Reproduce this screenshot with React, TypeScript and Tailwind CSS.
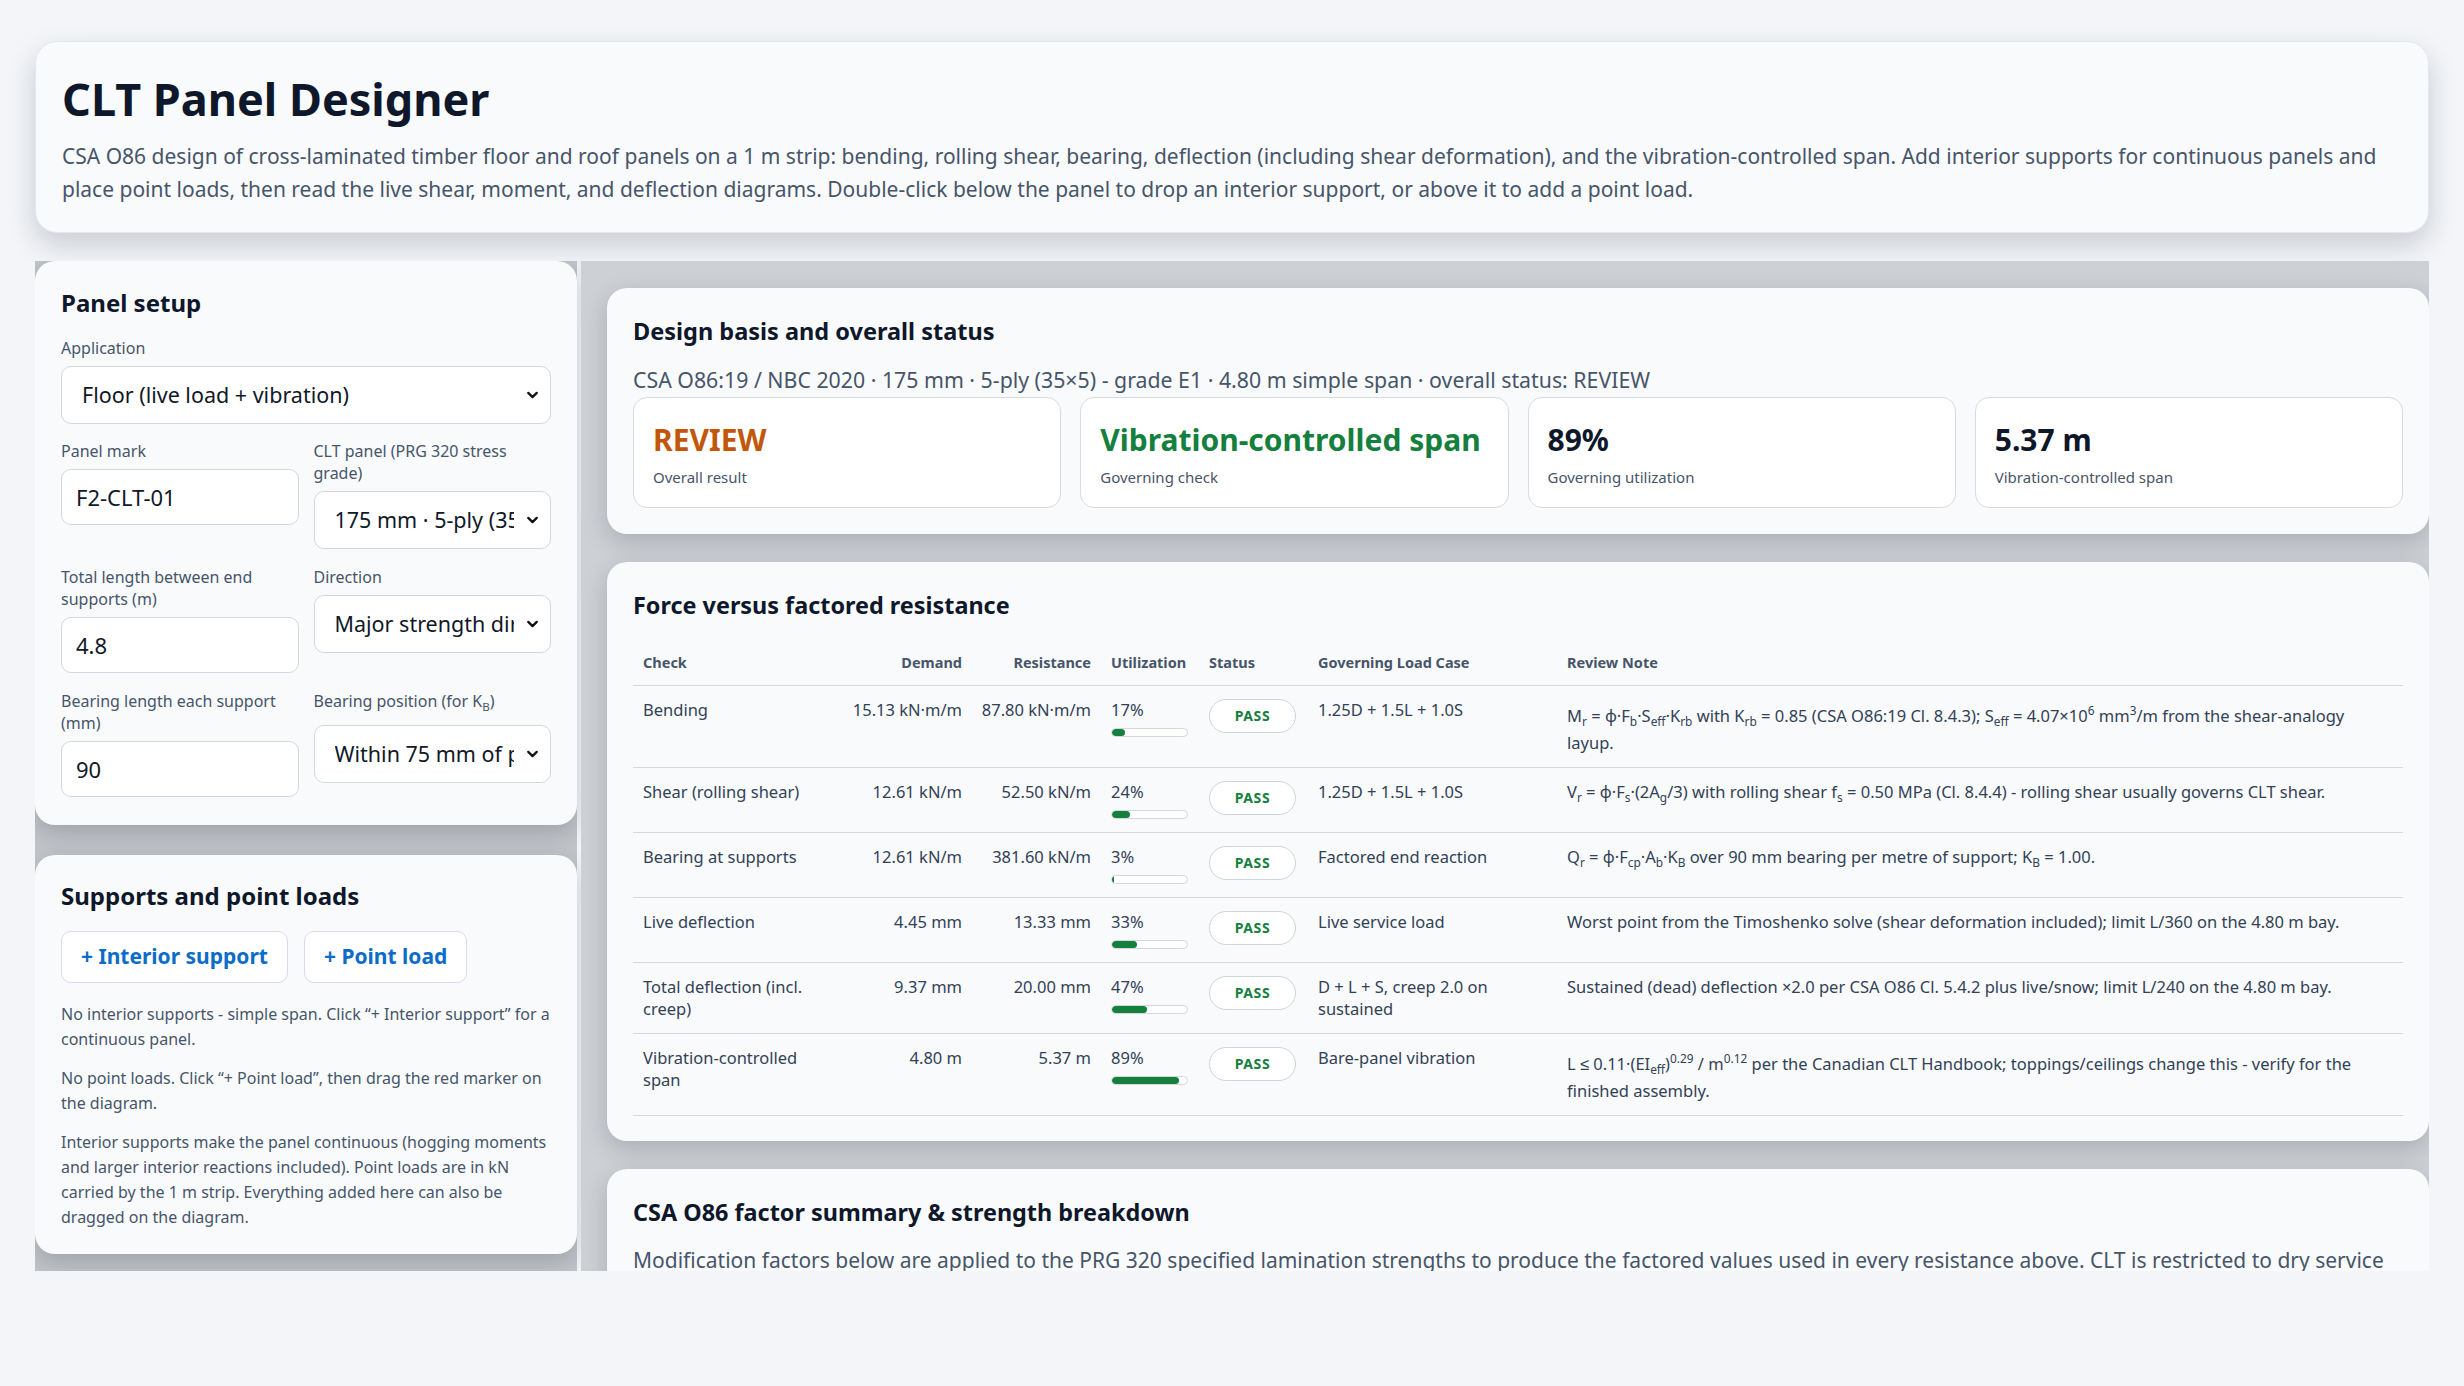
import { ChevronDown } from 'lucide-react';
import type { ReactNode } from 'react';

const Sub = ({ children }: { children: ReactNode }) => (
  <span className="align-sub text-[0.72em]">{children}</span>
);
const Sup = ({ children }: { children: ReactNode }) => (
  <span className="align-super text-[0.72em]">{children}</span>
);

type CheckRow = {
  check: string;
  demand: string;
  resistance: string;
  util: number;
  loadCase: string;
  note: ReactNode;
};

const rows: CheckRow[] = [
  {
    check: 'Bending',
    demand: '15.13 kN·m/m',
    resistance: '87.80 kN·m/m',
    util: 17,
    loadCase: '1.25D + 1.5L + 1.0S',
    note: (
      <>
        M<Sub>r</Sub> = φ·F<Sub>b</Sub>·S<Sub>eff</Sub>·K<Sub>rb</Sub> with K<Sub>rb</Sub> = 0.85 (CSA O86:19 Cl. 8.4.3); S
        <Sub>eff</Sub> = 4.07×10<Sup>6</Sup> mm<Sup>3</Sup>/m from the shear-analogy layup.
      </>
    ),
  },
  {
    check: 'Shear (rolling shear)',
    demand: '12.61 kN/m',
    resistance: '52.50 kN/m',
    util: 24,
    loadCase: '1.25D + 1.5L + 1.0S',
    note: (
      <>
        V<Sub>r</Sub> = φ·F<Sub>s</Sub>·(2A<Sub>g</Sub>/3) with rolling shear f<Sub>s</Sub> = 0.50 MPa (Cl. 8.4.4) - rolling
        shear usually governs CLT shear.
      </>
    ),
  },
  {
    check: 'Bearing at supports',
    demand: '12.61 kN/m',
    resistance: '381.60 kN/m',
    util: 3,
    loadCase: 'Factored end reaction',
    note: (
      <>
        Q<Sub>r</Sub> = φ·F<Sub>cp</Sub>·A<Sub>b</Sub>·K<Sub>B</Sub> over 90 mm bearing per metre of support; K<Sub>B</Sub> = 1.00.
      </>
    ),
  },
  {
    check: 'Live deflection',
    demand: '4.45 mm',
    resistance: '13.33 mm',
    util: 33,
    loadCase: 'Live service load',
    note: 'Worst point from the Timoshenko solve (shear deformation included); limit L/360 on the 4.80 m bay.',
  },
  {
    check: 'Total deflection (incl. creep)',
    demand: '9.37 mm',
    resistance: '20.00 mm',
    util: 47,
    loadCase: 'D + L + S, creep 2.0 on sustained',
    note: 'Sustained (dead) deflection ×2.0 per CSA O86 Cl. 5.4.2 plus live/snow; limit L/240 on the 4.80 m bay.',
  },
  {
    check: 'Vibration-controlled span',
    demand: '4.80 m',
    resistance: '5.37 m',
    util: 89,
    loadCase: 'Bare-panel vibration',
    note: (
      <>
        L ≤ 0.11·(EI<Sub>eff</Sub>)<Sup>0.29</Sup> / m<Sup>0.12</Sup> per the Canadian CLT Handbook; toppings/ceilings change
        this - verify for the finished assembly.
      </>
    ),
  },
];

function Label({ children }: { children: ReactNode }) {
  return <label className="block text-[16px] leading-[22px] text-[#475569]">{children}</label>;
}

function TextInput({ value }: { value: string }) {
  return (
    <input
      defaultValue={value}
      className="mt-[7px] block h-[56px] w-full rounded-[10px] border border-[#d3d8de] bg-white px-[14px] text-[22px] text-[#111827] outline-none"
    />
  );
}

function SelectBox({ value, options }: { value: string; options: string[] }) {
  return (
    <div className="relative mt-[7px]">
      <select
        defaultValue={value}
        className="block h-[58px] w-full appearance-none rounded-[10px] border border-[#d3d8de] bg-white pl-[20px] pr-[36px] text-[21.5px] text-[#111827] outline-none"
      >
        {options.map((o) => (
          <option key={o}>{o}</option>
        ))}
      </select>
      <ChevronDown
        className="pointer-events-none absolute right-[10px] top-1/2 -translate-y-1/2 text-[#111]"
        size={17}
        strokeWidth={3.2}
      />
    </div>
  );
}

function StatCard({ value, label, color }: { value: string; label: string; color: string }) {
  return (
    <div className="rounded-[14px] border border-[#d6dbe1] bg-white px-[19px] pb-[19px] pt-[20px]">
      <div className={`text-[30px] font-bold leading-[44px] ${color}`}>{value}</div>
      <div className="mt-[4px] text-[15px] leading-[22px] text-[#475569]">{label}</div>
    </div>
  );
}

function UtilBar({ pct }: { pct: number }) {
  return (
    <div className="mt-[7px] h-[9px] w-[77px] overflow-hidden rounded-full border border-[#d4d8dd] bg-white">
      <div className="h-full rounded-full bg-[#15803d]" style={{ width: `${pct}%` }} />
    </div>
  );
}

export default function App() {
  return (
    <div className="min-h-screen bg-[#f3f5f8] font-['Noto_Sans',sans-serif] text-[#0f172a]">
      <div className="px-[35px] pt-[41px]">
        {/* header */}
        <div className="rounded-[22px] border border-[#e2e8f0] bg-[#f8fafc] px-[26px] pb-[26px] pt-[28px] shadow-[0_12px_28px_rgba(15,23,42,0.18)]">
          <h1 className="text-[45px] font-bold leading-[58px] text-[#0f172a]">CLT Panel Designer</h1>
          <p className="mt-[12px] text-[21px] leading-[33px] text-[#475569]">
            CSA O86 design of cross-laminated timber floor and roof panels on a 1 m strip: bending, rolling shear, bearing,
            deflection (including shear deformation), and the vibration-controlled span. Add interior supports for continuous
            panels and place point loads, then read the live shear, moment, and deflection diagrams. Double-click below the
            panel to drop an interior support, or above it to add a point load.
          </p>
        </div>

        <div className="mt-[28px] flex h-[1010px] overflow-hidden">
          {/* left column */}
          <div className="flex w-[542px] shrink-0 flex-col gap-[30px] bg-[#c2c5c9]">
            <div className="rounded-[20px] bg-[#f8fafc] px-[26px] pb-[28px] pt-[25px] shadow-[0_8px_24px_rgba(15,23,42,0.2)]">
              <h2 className="text-[24px] font-bold leading-[34px]">Panel setup</h2>
              <div className="mt-[17px]">
                <Label>Application</Label>
                <SelectBox
                  value="Floor (live load + vibration)"
                  options={['Floor (live load + vibration)', 'Roof (snow load)']}
                />
              </div>
              <div className="mt-[16px] grid grid-cols-2 items-start gap-x-[15px] gap-y-[17px]">
                <div>
                  <Label>Panel mark</Label>
                  <TextInput value="F2-CLT-01" />
                </div>
                <div>
                  <Label>CLT panel (PRG 320 stress grade)</Label>
                  <SelectBox
                    value="175 mm · 5-ply (35×5) - grade E1"
                    options={['175 mm · 5-ply (35×5) - grade E1', '245 mm · 7-ply (35×7) - grade E1']}
                  />
                </div>
                <div>
                  <Label>Total length between end supports (m)</Label>
                  <TextInput value="4.8" />
                </div>
                <div>
                  <Label>Direction</Label>
                  <SelectBox
                    value="Major strength direction"
                    options={['Major strength direction', 'Minor strength direction']}
                  />
                </div>
                <div>
                  <Label>Bearing length each support (mm)</Label>
                  <TextInput value="90" />
                </div>
                <div>
                  <Label>
                    Bearing position (for K<Sub>B</Sub>)
                  </Label>
                  <SelectBox
                    value="Within 75 mm of panel end"
                    options={['Within 75 mm of panel end', 'More than 75 mm from panel end']}
                  />
                </div>
              </div>
            </div>

            <div className="rounded-[20px] bg-[#f8fafc] px-[26px] pb-[24px] pt-[24px] shadow-[0_8px_24px_rgba(15,23,42,0.2)]">
              <h2 className="text-[24px] font-bold leading-[34px]">Supports and point loads</h2>
              <div className="mt-[18px] flex gap-[16px]">
                <button className="h-[52px] rounded-[10px] border border-[#ddd8f6] bg-white px-[19px] text-[21px] font-bold text-[#0b6cc9]">
                  + Interior support
                </button>
                <button className="h-[52px] rounded-[10px] border border-[#ddd8f6] bg-white px-[19px] text-[21px] font-bold text-[#0b6cc9]">
                  + Point load
                </button>
              </div>
              <div className="mt-[19px] space-y-[14px] text-[16px] leading-[25px] text-[#475569]">
                <p>No interior supports - simple span. Click “+ Interior support” for a continuous panel.</p>
                <p>No point loads. Click “+ Point load”, then drag the red marker on the diagram.</p>
                <p>
                  Interior supports make the panel continuous (hogging moments and larger interior reactions included). Point
                  loads are in kN carried by the 1 m strip. Everything added here can also be dragged on the diagram.
                </p>
              </div>
            </div>
          </div>

          {/* right column */}
          <div className="ml-[4px] flex min-w-0 flex-1 flex-col gap-[28px] bg-[#cdd0d4] pl-[26px] pt-[27px]">
            <div className="rounded-[20px] bg-[#f8fafc] px-[26px] pb-[26px] pt-[27px] shadow-[0_8px_24px_rgba(15,23,42,0.18)]">
              <h2 className="text-[23.5px] font-bold leading-[32px]">Design basis and overall status</h2>
              <p className="mt-[17px] text-[21.3px] leading-[32px] text-[#475569]">
                CSA O86:19 / NBC 2020 · 175 mm · 5-ply (35×5) - grade E1 · 4.80 m simple span · overall status: REVIEW
              </p>
              <div className="mt-[1px] grid grid-cols-4 gap-[19px]">
                <StatCard value="REVIEW" label="Overall result" color="text-[#c2570c]" />
                <StatCard value="Vibration-controlled span" label="Governing check" color="text-[#15803d]" />
                <StatCard value="89%" label="Governing utilization" color="text-[#0f172a]" />
                <StatCard value="5.37 m" label="Vibration-controlled span" color="text-[#0f172a]" />
              </div>
            </div>

            <div className="rounded-[20px] bg-[#f8fafc] px-[26px] pb-[25px] pt-[27px] shadow-[0_8px_24px_rgba(15,23,42,0.18)]">
              <h2 className="text-[23.4px] font-bold leading-[32px]">Force versus factored resistance</h2>
              <table className="mt-[18px] w-full table-fixed border-collapse text-[16.5px] leading-[22px] text-[#334155]">
                <colgroup>
                  <col className="w-[212px]" />
                  <col className="w-[127px]" />
                  <col className="w-[129px]" />
                  <col className="w-[98px]" />
                  <col className="w-[109px]" />
                  <col className="w-[249px]" />
                  <col />
                </colgroup>
                <thead>
                  <tr className="border-b border-[#d5d9de] text-[14.5px] font-bold text-[#475569]">
                    <th className="px-[10px] pb-[12px] pt-[12px] text-left">Check</th>
                    <th className="px-[10px] pb-[12px] pt-[12px] text-right">Demand</th>
                    <th className="px-[10px] pb-[12px] pt-[12px] text-right">Resistance</th>
                    <th className="px-[10px] pb-[12px] pt-[12px] text-left">Utilization</th>
                    <th className="px-[10px] pb-[12px] pt-[12px] text-left">Status</th>
                    <th className="px-[10px] pb-[12px] pt-[12px] text-left">Governing Load Case</th>
                    <th className="px-[10px] pb-[12px] pt-[12px] text-left">Review Note</th>
                  </tr>
                </thead>
                <tbody>
                  {rows.map((r) => (
                    <tr key={r.check} className="border-b border-[#d5d9de] align-top">
                      <td className="px-[10px] py-[13px]">{r.check}</td>
                      <td className="whitespace-nowrap py-[13px] pl-[4px] pr-[10px] text-right">{r.demand}</td>
                      <td className="whitespace-nowrap py-[13px] pl-[4px] pr-[10px] text-right">{r.resistance}</td>
                      <td className="px-[10px] py-[13px]">
                        <div>{r.util}%</div>
                        <UtilBar pct={r.util} />
                      </td>
                      <td className="px-[10px] py-[13px]">
                        <span className="inline-flex h-[34px] w-[87px] items-center justify-center rounded-full border border-[#cfd5dd] bg-white text-[14px] font-bold tracking-[0.04em] text-[#15803d]">
                          PASS
                        </span>
                      </td>
                      <td className="px-[10px] py-[13px]">{r.loadCase}</td>
                      <td className="px-[10px] py-[13px]">{r.note}</td>
                    </tr>
                  ))}
                </tbody>
              </table>
            </div>

            <div className="rounded-[20px] bg-[#f8fafc] px-[26px] pb-[26px] pt-[27px] shadow-[0_8px_24px_rgba(15,23,42,0.18)]">
              <h2 className="text-[23.4px] font-bold leading-[32px]">CSA O86 factor summary &amp; strength breakdown</h2>
              <p className="mt-[16px] text-[21px] leading-[33px] text-[#475569]">
                Modification factors below are applied to the PRG 320 specified lamination strengths to produce the factored
                values used in every resistance above. CLT is restricted to dry service conditions, so K<Sub>S</Sub> = 1.0 and
                the treatment factor K<Sub>T</Sub> = 1.0 throughout.
              </p>
            </div>
          </div>
        </div>
      </div>
    </div>
  );
}
